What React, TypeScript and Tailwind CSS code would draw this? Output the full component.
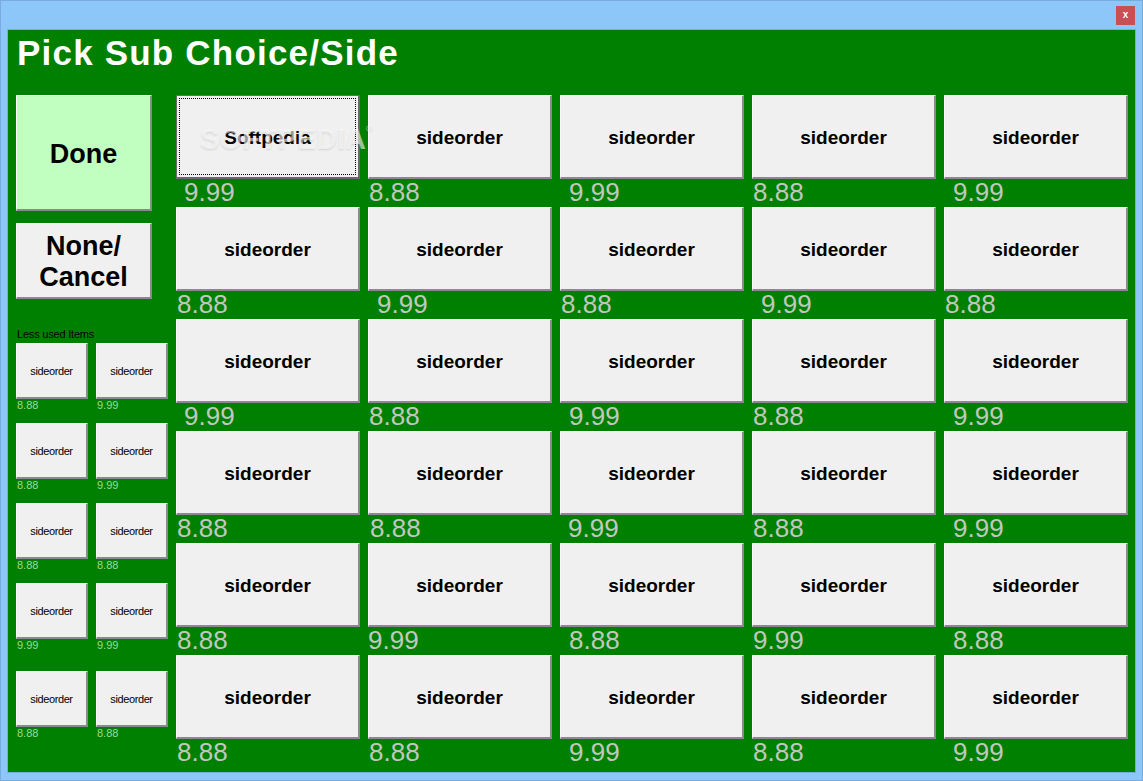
const mainPrices: { p: string; o: number }[][] = [
  [{ p: '9.99', o: 8 }, { p: '8.88', o: 1 }, { p: '9.99', o: 9 }, { p: '8.88', o: 1 }, { p: '9.99', o: 9 }],
  [{ p: '8.88', o: 1 }, { p: '9.99', o: 9 }, { p: '8.88', o: 1 }, { p: '9.99', o: 9 }, { p: '8.88', o: 1 }],
  [{ p: '9.99', o: 8 }, { p: '8.88', o: 1 }, { p: '9.99', o: 9 }, { p: '8.88', o: 1 }, { p: '9.99', o: 9 }],
  [{ p: '8.88', o: 1 }, { p: '8.88', o: 2 }, { p: '9.99', o: 8 }, { p: '8.88', o: 1 }, { p: '9.99', o: 9 }],
  [{ p: '8.88', o: 1 }, { p: '9.99', o: 0 }, { p: '8.88', o: 9 }, { p: '9.99', o: 1 }, { p: '8.88', o: 9 }],
  [{ p: '8.88', o: 1 }, { p: '8.88', o: 1 }, { p: '9.99', o: 9 }, { p: '8.88', o: 1 }, { p: '9.99', o: 9 }],
];

const smallRows: { a: string; b: string; h: string }[] = [
  { a: '8.88', b: '9.99', h: 'h-[80px]' },
  { a: '8.88', b: '9.99', h: 'h-[80px]' },
  { a: '8.88', b: '8.88', h: 'h-[80px]' },
  { a: '9.99', b: '9.99', h: 'h-[88px]' },
  { a: '8.88', b: '8.88', h: 'h-[80px]' },
];

const btn =
  'flex items-center justify-center bg-[#f0f0f0] border-t border-l border-t-white border-l-white border-b-2 border-r-2 border-b-[#8a8a8a] border-r-[#8a8a8a] text-black';

function SmallItem({ price }: { price: string }) {
  return (
    <div className="flex flex-col w-[72px]">
      <div className={`${btn} h-[56px] pt-[1px] text-[11px] tracking-[-0.4px]`}>sideorder</div>
      <div className="mt-[1px] pl-[1px] text-[11px] leading-none text-[#98dc98]">{price}</div>
    </div>
  );
}

export default function App() {
  return (
    <div
      className="w-[1143px] h-[781px] bg-[#8dc6f9] border border-[#79acdd] flex flex-col overflow-hidden"
      style={{ fontFamily: '"Liberation Sans", Arial, sans-serif' }}
    >
      {/* title bar */}
      <div className="h-[28px] flex items-start justify-end pr-[7px] pt-[5px]">
        <div className="w-[19px] h-[19px] bg-[#c75050] flex items-center justify-center text-white text-[10px] font-bold leading-none pb-[2px]">
          x
        </div>
      </div>

      {/* green panel */}
      <div className="mx-[6px] h-[744px] border border-[#78acdc] bg-[#008000] flex flex-col">
        <div className="h-[65px] pl-[9px] pt-[5px] text-white font-bold text-[35px] leading-none tracking-[1.2px]">
          Pick Sub Choice/Side
        </div>

        <div className="flex gap-[8px] pl-[8px]">
          {/* left column */}
          <div className="w-[152px] flex flex-col">
            <div className="w-[136px] h-[116px] pt-[3px] flex items-center justify-center bg-[#c0ffc0] border-t border-l border-t-white border-l-white border-b-2 border-r-2 border-b-[#8a8a8a] border-r-[#8a8a8a] font-bold text-[27px] text-black">
              Done
            </div>
            <div className={`${btn} mt-[12px] w-[136px] h-[76px] pt-[2px] flex-col font-bold text-[27px] leading-[31px] text-center`}>
              <span>None/</span>
              <span>Cancel</span>
            </div>
            <div className="mt-[29px] h-[13px] pl-[1px] text-[11px] leading-[13px] text-black tracking-[-0.2px]">
              Less used Items
            </div>
            <div className="mt-[2px] flex flex-col">
              {smallRows.map((r, i) => (
                <div key={i} className={`flex gap-[8px] ${r.h}`}>
                  <SmallItem price={r.a} />
                  <SmallItem price={r.b} />
                </div>
              ))}
            </div>
          </div>

          {/* main grid */}
          <div className="relative grid grid-cols-[repeat(5,184px)] gap-x-[8px]">
            {mainPrices.map((row, ri) =>
              row.map((c, ci) => {
                const first = ri === 0 && ci === 0;
                return (
                  <div key={`${ri}-${ci}`} className="h-[112px] flex flex-col">
                    {first ? (
                      <div className="h-[84px] bg-[#f0f0f0] border border-[#6a6a6a] border-b-2 border-r-2 p-[2px]">
                        <div className="w-full h-full pt-[3px] border border-dotted border-black flex items-center justify-center font-bold text-[19px] text-black">
                          Softpedia
                        </div>
                      </div>
                    ) : (
                      <div className={`${btn} h-[84px] pt-[3px] font-bold text-[19px]`}>sideorder</div>
                    )}
                    <div
                      className="text-[26px] leading-none text-[#c0c8c0]"
                      style={{ paddingLeft: c.o }}
                    >
                      {c.p}
                    </div>
                  </div>
                );
              })
            )}
            <div className="pointer-events-none absolute left-[24px] top-[30px] text-[29px] font-bold text-white/60 leading-none [text-shadow:0_1px_2px_rgba(0,0,0,0.12)]">
              SOFTPEDIA<span className="text-[9px] align-top">®</span>
            </div>
          </div>
        </div>
      </div>
    </div>
  );
}
